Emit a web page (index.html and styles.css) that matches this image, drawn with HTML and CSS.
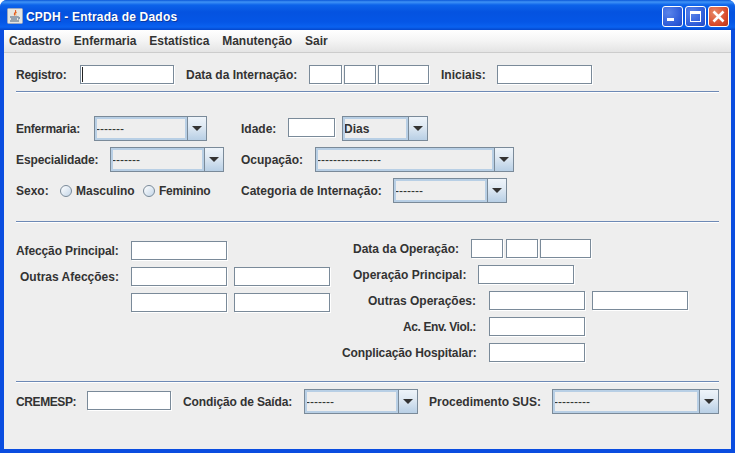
FILE: index.html
```html
<!DOCTYPE html>
<html lang="pt">
<head>
<meta charset="utf-8">
<title>CPDH - Entrada de Dados</title>
<link rel="stylesheet" href="styles.css">
</head>
<body>
<div class="window">
  <header class="titlebar">
    <svg class="appicon" width="16" height="16" viewBox="0 0 16 16">
      <rect x="0.5" y="0.5" width="15" height="15" rx="1" fill="#e6e6e0" stroke="#9aa6c0"/>
      <path d="M8 2c1 2-2 3-1 5 .3.6.8 1 1 1-1-2 2-3 1-6z" fill="#e2571e"/>
      <path d="M10 4c-1 1-2 1.500-1 3.500" fill="none" stroke="#f08a30"/>
      <path d="M3 9h8M4 11h6M3 13h9" stroke="#46617f" fill="none"/>
      <path d="M11 9c2 0 2 2 0 2" stroke="#46617f" fill="none"/>
    </svg>
    <span class="title">CPDH - Entrada de Dados</span>
    <div class="winbtns">
      <span class="winbtn">
        <svg width="21" height="21" viewBox="0 0 21 21"><rect x="5" y="12" width="7" height="3" fill="#fff"/></svg>
      </span>
      <span class="winbtn">
        <svg width="21" height="21" viewBox="0 0 21 21"><path d="M5 5h11v11H5z M6 8v7h9V8z" fill="#fff" fill-rule="evenodd"/></svg>
      </span>
      <span class="winbtn close">
        <svg width="21" height="21" viewBox="0 0 21 21"><path d="M5.500 5.500l10 10M15.500 5.500l-10 10" stroke="#fff" stroke-width="2.600" fill="none"/></svg>
      </span>
    </div>
  </header>
  <div class="client">
    <nav class="menubar">
      <span class="menu">Cadastro</span>
      <span class="menu">Enfermaria</span>
      <span class="menu">Estatística</span>
      <span class="menu">Manutenção</span>
      <span class="menu">Sair</span>
    </nav>
    <main class="form">
      <div class="row r-top">
        <label class="lbl t2 w64">Registro:</label>
        <span class="field focus w94"></span>
        <label class="lbl ml12 w123">Data da Internação:</label>
        <span class="field w33"></span>
        <span class="field w32 ml2"></span>
        <span class="field w51 ml2"></span>
        <label class="lbl ml12 w56">Iniciais:</label>
        <span class="field w95"></span>
      </div>
      <hr class="rule rule-1">

      <div class="row r-a">
        <div class="cell w225">
          <label class="lbl t2 w78">Enfermaria:</label>
          <span class="combo w113"><span class="val">-------</span><span class="arrow"></span></span>
        </div>
        <label class="lbl w47">Idade:</label>
        <span class="field w47"></span>
        <span class="combo w86 ml7"><span class="val bold">Dias</span><span class="arrow"></span></span>
      </div>
      <div class="row r-b">
        <div class="cell w225">
          <label class="lbl t1 w94">Especialidade:</label>
          <span class="combo w114"><span class="val">-------</span><span class="arrow"></span></span>
        </div>
        <label class="lbl w74">Ocupação:</label>
        <span class="combo w199"><span class="val">----------------</span><span class="arrow"></span></span>
      </div>
      <div class="row r-c">
        <div class="cell w225">
          <label class="lbl w44">Sexo:</label>
          <span class="radio"></span><label class="lbl w67">Masculino</label>
          <span class="radio"></span><label class="lbl t2">Feminino</label>
        </div>
        <label class="lbl w152">Categoria de Internação:</label>
        <span class="combo w114"><span class="val">-------</span><span class="arrow"></span></span>
      </div>
      <hr class="rule rule-2">

      <div class="columns">
        <div class="col-left">
          <div class="row lrow">
            <label class="lbl t1 w115">Afecção Principal:</label>
            <span class="field w96"></span>
          </div>
          <div class="row lrow">
            <label class="lbl w111 ml4">Outras Afecções:</label>
            <span class="field w96"></span>
            <span class="field w96 ml7"></span>
          </div>
          <div class="row lrow">
            <span class="field w96 ml115"></span>
            <span class="field w96 ml7"></span>
          </div>
        </div>
        <div class="col-right">
          <div class="row rrow">
            <label class="lbl w118 ml11">Data da Operação:</label>
            <span class="field w32"></span>
            <span class="field w32 ml3"></span>
            <span class="field w51 ml2"></span>
          </div>
          <div class="row rrow">
            <label class="lbl w125 ml11">Operação Principal:</label>
            <span class="field w96"></span>
          </div>
          <div class="row rrow">
            <label class="lbl w121 ml26">Outras Operações:</label>
            <span class="field w96"></span>
            <span class="field w96 ml7"></span>
          </div>
          <div class="row rrow">
            <label class="lbl t3 w86 ml61">Ac. Env. Viol.:</label>
            <span class="field w96"></span>
          </div>
          <div class="row rrow">
            <label class="lbl t1 w147">Conplicação Hospitalar:</label>
            <span class="field w96"></span>
          </div>
        </div>
      </div>
      <hr class="rule rule-3">

      <div class="row r-bottom">
        <label class="lbl t3 w71">CREMESP:</label>
        <span class="field w84"></span>
        <label class="lbl t1 w121 ml12">Condição de Saída:</label>
        <span class="combo w114"><span class="val">-------</span><span class="arrow"></span></span>
        <label class="lbl w123 ml11">Procedimento SUS:</label>
        <span class="combo w167"><span class="val">---------</span><span class="arrow"></span></span>
      </div>
    </main>
  </div>
</div>
</body>
</html>
```

FILE: styles.css
```css
* { box-sizing: border-box; }
html, body { margin: 0; padding: 0; background: #fff; }
body { width: 736px; height: 453px; overflow: hidden; font-family: "Liberation Sans", Arial, sans-serif; }

.window {
  width: 735px;
  height: 453px;
  display: flex;
  flex-direction: column;
  background: #0a4de0;
  border-radius: 7px 7px 0 0;
  overflow: hidden;
}
.titlebar {
  height: 30px;
  flex: none;
  display: flex;
  align-items: center;
  padding: 2px 6px 0 7px;
  background: linear-gradient(180deg, #0a57d8 0, #3f93f6 2px, #0c63ea 5px, #0553e0 12px, #0556e6 22px, #0a62f0 27px, #0447cc 30px);
}
.appicon { flex: none; }
.title {
  margin-left: 3px;
  margin-top: 1px;
  color: #fff;
  font-size: 12px;
  font-weight: bold;
  text-shadow: 1px 1px 0 #0b3aa0;
  letter-spacing: 0.2px;
}
.winbtns { margin-left: auto; display: flex; gap: 2px; margin-top: 1px; }
.winbtn {
  width: 21px;
  height: 21px;
  display: block;
  border: 1px solid #fff;
  border-radius: 3px;
  background: radial-gradient(circle at 30% 30%, #5b85ea, #2c5ad8 70%, #2048c0);
}
.winbtn svg { display: block; margin: -1px; }
.winbtn.close { background: radial-gradient(circle at 30% 30%, #e88a68, #d8492a 65%, #b83418); }

.client {
  flex: 1;
  margin: 0 4px 4px 4px;
  background: #eeeeee;
  display: flex;
  flex-direction: column;
  min-height: 0;
}
.menubar {
  height: 23px;
  flex: none;
  display: flex;
  align-items: center;
  padding: 0 0 0 5px;
  gap: 12.800px;
  background: linear-gradient(180deg, #ffffff 0, #f4f4f4 50%, #e4e4e4 100%);
  border-bottom: 1px solid #cccccc;
}
.menu { font-size: 12px; font-weight: bold; color: #333333; }

.form { flex: 1; padding: 12px 12px 0 12px; display: flex; flex-direction: column; }
.row { display: flex; align-items: center; }
.r-top { height: 19px; }
.r-top .lbl { padding-top: 1px; }
.r-a { height: 25px; }
.r-a .field { margin-bottom: 2px; }
.r-b { height: 25px; margin-top: 6px; }
.r-c { height: 25px; margin-top: 6px; }
.r-bottom { height: 25px; margin-top: 6px; }
.r-bottom .field { margin-bottom: 2px; }

.rule { border: 0; height: 2px; margin: 0; background: linear-gradient(180deg, #6d89b5 50%, #ffffff 50%); flex: none; width: 703px; }
.rule-1 { margin-top: 7px; margin-bottom: 23px; }
.rule-2 { margin-top: 18px; margin-bottom: 0; }
.rule-3 { margin-top: 18px; }

.lbl { font-size: 12px; font-weight: bold; color: #333333; white-space: nowrap; flex: none; display: block; }
.t1 { letter-spacing: -0.12px; }
.t2 { letter-spacing: -0.25px; }
.t3 { letter-spacing: -0.4px; }
.cell { display: flex; align-items: center; flex: none; }

.field {
  height: 19px;
  flex: none;
  display: block;
  background: #fff;
  border: 1px solid #7a8a99;
  box-shadow: 1px 1px 0 #fff;
}
.field.focus { position: relative; }
.field.focus::before { content: ""; position: absolute; left: 1px; top: 1px; bottom: 1px; width: 1px; background: #222; }

.combo {
  height: 25px;
  flex: none;
  display: flex;
  border: 1px solid #7a8a99;
  background: #eeeeee;
}
.val {
  flex: 1;
  min-width: 0;
  border: 2px solid #b8cfe5;
  text-indent: -1px;
  font-size: 12px;
  color: #333333;
  line-height: 20px;
  overflow: hidden;
  white-space: nowrap;
}
.val.bold { font-weight: bold; }
.arrow {
  width: 19px;
  flex: none;
  border-left: 1px solid #7a8a99;
  background: linear-gradient(180deg, #eef4fa 0, #dfe9f3 40%, #b8cfe5 100%);
  display: flex;
  align-items: center;
  justify-content: center;
}
.arrow::after {
  content: "";
  width: 0;
  height: 0;
  border-left: 5px solid transparent;
  border-right: 5px solid transparent;
  border-top: 5px solid #333333;
}

.radio {
  width: 12px;
  height: 12px;
  flex: none;
  border-radius: 50%;
  border: 1px solid #7a8a99;
  background: linear-gradient(135deg, #ffffff, #c4d6e8);
  margin-right: 4px;
}

.columns { display: flex; height: 140px; flex: none; }
.col-left { width: 326px; flex: none; padding-top: 18px; display: flex; flex-direction: column; gap: 7px; }
.col-right { flex: none; padding-top: 16px; display: flex; flex-direction: column; gap: 7px; }
.lrow, .rrow { height: 19px; }
.lrow .lbl, .rrow .lbl { padding-top: 1px; }

.ml2 { margin-left: 2px; }
.ml3 { margin-left: 3px; }
.ml4 { margin-left: 4px; }
.ml7 { margin-left: 7px; }
.ml11 { margin-left: 11px; }
.ml12 { margin-left: 12px; }
.ml26 { margin-left: 26px; }
.ml61 { margin-left: 61px; }
.ml115 { margin-left: 115px; }

.w32 { width: 32px; }
.w33 { width: 33px; }
.w44 { width: 44px; }
.w47 { width: 47px; }
.w51 { width: 51px; }
.w56 { width: 56px; }
.w64 { width: 64px; }
.w67 { width: 67px; }
.w71 { width: 71px; }
.w74 { width: 74px; }
.w78 { width: 78px; }
.w84 { width: 84px; }
.w86 { width: 86px; }
.w94 { width: 94px; }
.w95 { width: 95px; }
.w96 { width: 96px; }
.w111 { width: 111px; }
.w113 { width: 113px; }
.w114 { width: 114px; }
.w115 { width: 115px; }
.w118 { width: 118px; }
.w121 { width: 121px; }
.w123 { width: 123px; }
.w125 { width: 125px; }
.w147 { width: 147px; }
.w152 { width: 152px; }
.w167 { width: 167px; }
.w199 { width: 199px; }
.w225 { width: 225px; }
```
